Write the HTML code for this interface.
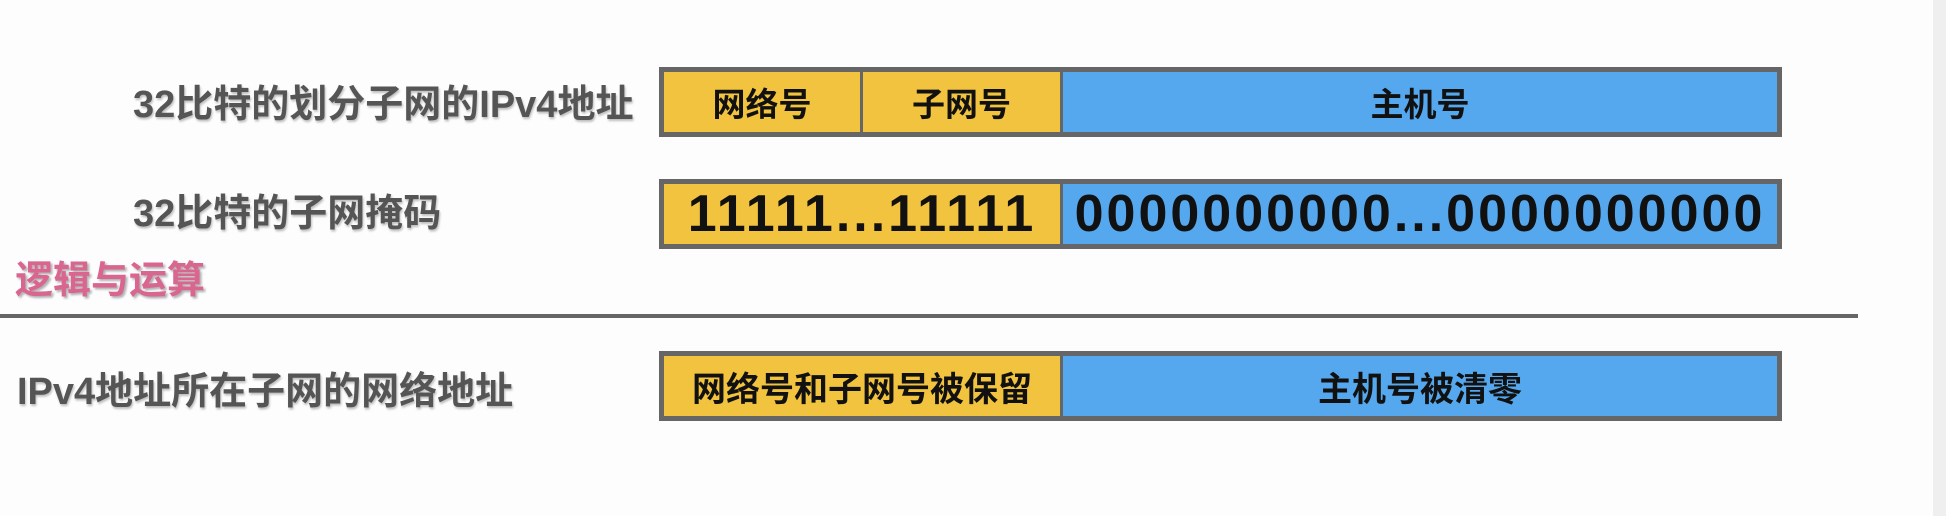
<!DOCTYPE html>
<html><head><meta charset="utf-8"><style>
body{margin:0;width:1946px;height:516px;background:#fdfdfd;position:relative;overflow:hidden;font-family:"Liberation Sans","Noto Sans CJK SC",sans-serif}
.strip{position:absolute;left:1933px;top:0;width:13px;height:516px;background:#efefef}
.lbl{position:absolute;color:#555;font-weight:bold;font-size:38px;line-height:46px;text-shadow:1px 2px 2px rgba(0,0,0,.25);white-space:nowrap}
.box{position:absolute;left:659px;width:1123px;border:5px solid #666;box-sizing:border-box;display:flex;background:#666}
.c{display:flex;align-items:center;justify-content:center;font-weight:bold;color:#111;box-sizing:border-box;white-space:nowrap}
.y{background:#f2c33e}.b{background:#55a8ee}
.n{font-size:52px;letter-spacing:3px;font-weight:900}
</style></head><body>
<div class="strip"></div>
<div class="lbl" style="left:133px;top:82px">32比特的划分子网的IPv4地址</div>
<div class="lbl" style="left:133px;top:191px">32比特的子网掩码</div>
<div class="lbl" style="left:15px;top:258px;color:#d9668f;text-shadow:2px 2px 2px rgba(0,0,0,.3)">逻辑与运算</div>
<div class="lbl" style="left:17px;top:369px">IPv4地址所在子网的网络地址</div>
<div style="position:absolute;left:0;top:314px;width:1858px;height:4px;background:#666"></div>

<div class="box" style="top:67px;height:70px">
<div class="c y" style="width:196px;font-size:33px;margin-right:3px">网络号</div>
<div class="c y" style="width:197px;font-size:33px;margin-right:3px">子网号</div>
<div class="c b" style="flex:1;font-size:33px">主机号</div>
</div>
<div class="box" style="top:179px;height:70px">
<div class="c y n" style="width:396px;margin-right:3px">11111...11111</div>
<div class="c b n" style="flex:1">0000000000...0000000000</div>
</div>
<div class="box" style="top:351px;height:70px">
<div class="c y" style="width:396px;font-size:34px;margin-right:3px">网络号和子网号被保留</div>
<div class="c b" style="flex:1;font-size:34px">主机号被清零</div>
</div>
</body></html>
